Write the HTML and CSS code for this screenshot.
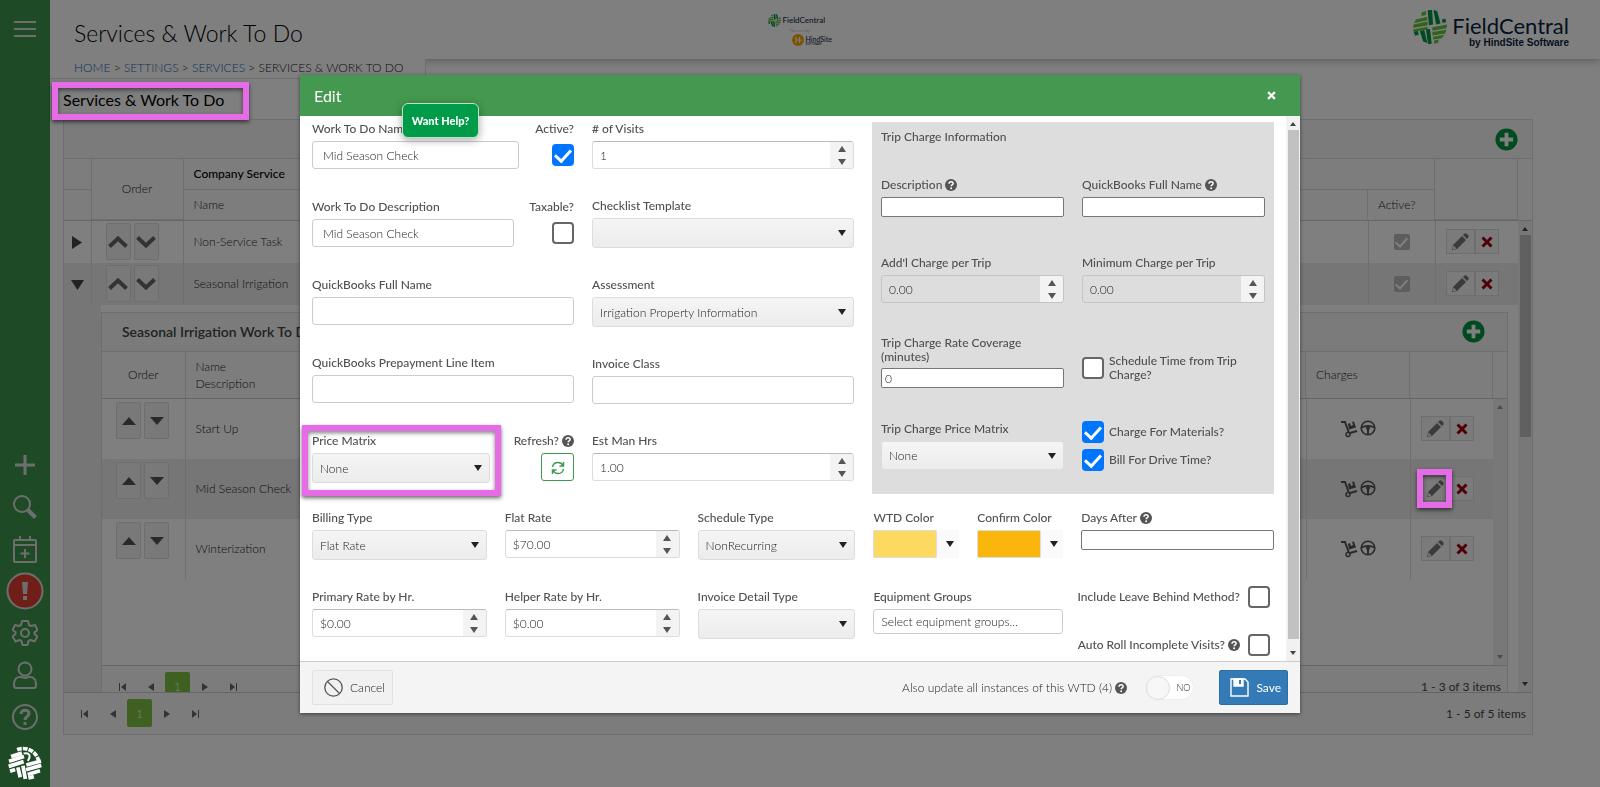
FILE: index.html
```html
<!DOCTYPE html>
<html lang="en">
<head>
  <meta charset="UTF-8">
  <title>Services &amp; Work To Do</title>
  <meta name="viewport" content="width=device-width, initial-scale=1.0">
  <link rel="stylesheet" href="styles.css">
</head>
<body>

<!-- shared icons -->
<svg class="sprite" aria-hidden="true">
  <symbol id="i-mark" viewBox="0 0 100 100">
    <g fill="#66c23c">
      <path d="M25 7l13-4v12l-13 3zM8 28l34-8v10L3 39zM2 43l41-9v11L0 53zM0 57l43-8v8l-40 7z"/>
      <path d="M57 51l43-8-1 11-42 7zM57 65l41-7-3 11-38 6zM59 79l33-6-7 10-26 4zM62 90l14-3-2 9-12 3z"/>
    </g>
    <g fill="#009444">
      <path d="M43 1l13-1 3 43-12 2zM60 0l11 3 10 37-13 3zM85 28l10-3 3 10-11 3zM2 64l12-2 3 11-11 3z"/>
      <path d="M20 62l13-3 9 38-12-4zM38 57l12-1 5 43-11 1z"/>
    </g>
  </symbol>
  <symbol id="i-help" viewBox="0 0 16 16">
    <circle cx="8" cy="8" r="8" fill="#555"/>
    <path d="M5.400 6.200c0-3.500 5.400-3.200 5.400-.3 0 2-2.600 1.900-2.600 3.900" fill="none" stroke="#fff" stroke-width="2"/>
    <circle cx="8.200" cy="12.300" r="1.300" fill="#fff"/>
  </symbol>
  <symbol id="i-pencil" viewBox="0 0 18 18">
    <path d="M1 17l1-5L11 3l4 4-9 9zM12 2l1-1c1-1 2-1 3 0l1 1c1 1 1 2 0 3l-1 1z" fill="#777"/>
    <path d="M2.500 12.500l3 3-3 1-1-1z" fill="#eee"/>
  </symbol>
  <symbol id="i-x" viewBox="0 0 12 12">
    <path d="M1.500 1.500l9 9M10.500 1.500l-9 9" stroke="currentColor" stroke-width="3"/>
  </symbol>
  <symbol id="i-add" viewBox="0 0 24 24">
    <circle cx="12" cy="12" r="11.500" fill="#009440"/>
    <path d="M12 5v14M5 12h14" stroke="#fff" stroke-width="4"/>
  </symbol>
  <symbol id="i-up" viewBox="0 0 20 12"><path d="M1.500 10.500L10 2.500l8.500 8" fill="none" stroke="#666" stroke-width="4"/></symbol>
  <symbol id="i-down" viewBox="0 0 20 12"><path d="M1.500 1.500L10 9.500l8.500-8" fill="none" stroke="#666" stroke-width="4"/></symbol>
  <symbol id="i-tri-up" viewBox="0 0 10 10" preserveAspectRatio="none"><path d="M0 10L5 0l5 10z" fill="currentColor"/></symbol>
  <symbol id="i-tri-down" viewBox="0 0 10 10" preserveAspectRatio="none"><path d="M0 0h10L5 10z" fill="currentColor"/></symbol>
  <symbol id="i-prev" viewBox="0 0 8 8"><path d="M7 0v8L1 4z" fill="#666"/></symbol>
  <symbol id="i-next" viewBox="0 0 8 8"><path d="M1 0v8l6-4z" fill="#666"/></symbol>
  <symbol id="i-first" viewBox="0 0 8 8"><path d="M1 0h1v8H1zM8 0v8L3 4z" fill="#666"/></symbol>
  <symbol id="i-last" viewBox="0 0 8 8"><path d="M6 0h1v8H6zM0 0v8l5-4z" fill="#666"/></symbol>
  <symbol id="i-cart" viewBox="0 0 18 18">
    <path d="M1 2h4l4 11" fill="none" stroke="#555" stroke-width="2"/>
    <circle cx="8" cy="14.500" r="2" fill="none" stroke="#555" stroke-width="1.500"/>
    <path d="M10 13l7-2" stroke="#555" stroke-width="2"/>
    <path d="M8 4l2-1 1 3 2-1-1-3 2-.5 2 6-7 2z" fill="#555"/>
  </symbol>
  <symbol id="i-wheel" viewBox="0 0 16 16">
    <circle cx="8" cy="8" r="6.800" fill="none" stroke="#555" stroke-width="1.600"/>
    <path d="M1.500 7.500C5 5.500 11 5.500 14.500 7.500M8 9v6" fill="none" stroke="#555" stroke-width="2"/>
    <circle cx="8" cy="8" r="2" fill="#555"/>
  </symbol>
</svg>

<nav class="sidebar">
  <button class="side-btn menu" aria-label="Menu">
    <svg width="22" height="18" viewBox="0 0 22 18"><path d="M0 2h22M0 9h22M0 16h22"/></svg>
  </button>
  <div class="side-bottom">
    <button class="side-btn" aria-label="Add"><svg width="20" height="20" viewBox="0 0 20 20"><path d="M10 0v20M0 10h20" stroke-width="3"/></svg></button>
    <button class="side-btn" aria-label="Search"><svg width="24" height="24" viewBox="0 0 24 24"><circle cx="9" cy="9" r="8"/><path d="M14.500 14.500l8 8" stroke-width="4"/></svg></button>
    <button class="side-btn" aria-label="Schedule"><svg width="24" height="27" viewBox="0 0 24 27"><rect x="1" y="4" width="22" height="22" rx="1"/><path d="M1 9h22M7 0v5M17 0v5M12 13v9M7.500 17.500h9"/></svg></button>
    <button class="side-btn" aria-label="Alerts"><svg width="38" height="38" viewBox="0 0 38 38"><circle cx="19" cy="19" r="17.500" fill="#e03c31"/><path d="M16 10h6l-1 12h-4zM17 24h4v4h-4z" fill="#ddd" stroke="none"/></svg></button>
    <button class="side-btn" aria-label="Settings"><svg width="26" height="26" viewBox="0 0 26 26"><path d="M10 1h6l1 4 2 1 4-1 2.500 5-3 2.500v1.500l3 2.500-3 5-4-1.500-2 1-1 4h-5l-1-4-2-1-4 1.500-3-5 3-2.500v-2L.5 10 3 5l4 1 2-1z" stroke-linejoin="round"/><circle cx="13" cy="13" r="4"/></svg></button>
    <button class="side-btn" aria-label="Account"><svg width="24" height="28" viewBox="0 0 24 28"><circle cx="12" cy="8" r="6.500"/><path d="M1 24c0-9 6-9 11-7 5-2 11-2 11 7 0 2-1 3-2 3H3c-1 0-2-1-2-3z"/></svg></button>
    <button class="side-btn" aria-label="Help"><svg width="26" height="26" viewBox="0 0 26 26"><circle cx="13" cy="13" r="12"/><path d="M9 10c0-5 8-5 8-.5 0 3-4 3-4 6.500M13 18v3" stroke-width="3"/></svg></button>
    <a class="side-logo" href="#" aria-label="FieldCentral">
      <svg width="34" height="34" viewBox="0 0 100 100" fill="none" stroke="#fff" stroke-width="11">
        <path d="M27 11A46 46 0 0 1 90 44" stroke-dasharray="14 3"/>
        <path d="M46 22c18-4 22 8 12 22" stroke-width="6"/>
        <path d="M9 31l32-10M3 45l44-14M2 60l44-14M6 74l15-5"/>
        <path d="M54 56l43-12M53 70l45-13M58 84l36-11" />
        <path d="M29 63l7 29M44 58l7 39M60 94l16-4"/>
      </svg>
    </a>
  </div>
</nav>

<div class="page">
  <header class="topbar">
    <h1>Services &amp; Work To Do</h1>
    <div class="center-logo">
      <div class="mini"><svg width="13" height="13"><use href="#i-mark"/></svg>FieldCentral</div>
      <div class="powered">Powered by</div>
      <div class="mini-hs">
        <svg width="12" height="12" viewBox="0 0 12 12"><circle cx="6" cy="6" r="6" fill="#f5a800"/><path d="M4 3v6M7.500 3v6M4 6h6" stroke="#fff"/></svg>
        <span>HindSite<small>SOFTWARE</small></span>
      </div>
    </div>
    <div class="brand">
      <svg width="34" height="34"><use href="#i-mark"/></svg>
      <div class="brand-text">FieldCentral<small>by HindSite Software</small></div>
    </div>
    <div class="breadcrumb">
      <a href="#">HOME</a> &gt; <a href="#">SETTINGS</a> &gt; <a href="#">SERVICES</a> &gt; SERVICES &amp; WORK TO DO
    </div>
  </header>

  <main>
    <h2><span class="callout callout-title"></span>Services &amp; Work To Do</h2>

    <div class="grid">
      <div class="grid-toolbar"><button class="add-btn" aria-label="Add service"><svg width="23" height="23"><use href="#i-add"/></svg></button></div>
      <div class="grid-head">
        <table>
          <colgroup><col class="w-expand"><col class="w-order"><col><col class="w-active"><col class="w-actions"></colgroup>
          <tr><th></th><th rowspan="2" class="center">Order</th><th colspan="2" class="strong">Company Service</th><th rowspan="2"></th></tr>
          <tr><th></th><th>Name</th><th>Active?</th></tr>
        </table>
      </div>
      <div class="grid-content">
        <div class="grid-scroll">
          <table class="rows">
            <colgroup><col class="w-expand"><col class="w-order"><col><col class="w-active"><col class="w-actions"></colgroup>
            <tr>
              <td class="center"><svg width="10" height="13" viewBox="0 0 10 13"><path d="M0 0l10 6.500L0 13z" fill="#444"/></svg></td>
              <td><div class="pair"><button class="move" aria-label="Move up"><svg width="20" height="12"><use href="#i-up"/></svg></button><button class="move" aria-label="Move down"><svg width="20" height="12"><use href="#i-down"/></svg></button></div></td>
              <td>Non-Service Task</td>
              <td class="center"><input type="checkbox" class="check off" checked disabled aria-label="Active"></td>
              <td><div class="actions"><button aria-label="Edit"><svg width="18" height="18"><use href="#i-pencil"/></svg></button><button class="del" aria-label="Delete"><svg width="12" height="12"><use href="#i-x"/></svg></button></div></td>
            </tr>
            <tr class="alt">
              <td class="center"><svg width="13" height="10" viewBox="0 0 13 10"><path d="M0 0h13L6.500 10z" fill="#444"/></svg></td>
              <td><div class="pair"><button class="move" aria-label="Move up"><svg width="20" height="12"><use href="#i-up"/></svg></button><button class="move" aria-label="Move down"><svg width="20" height="12"><use href="#i-down"/></svg></button></div></td>
              <td>Seasonal Irrigation</td>
              <td class="center"><input type="checkbox" class="check off" checked disabled aria-label="Active"></td>
              <td><div class="actions"><button aria-label="Edit"><svg width="18" height="18"><use href="#i-pencil"/></svg></button><button class="del" aria-label="Delete"><svg width="12" height="12"><use href="#i-x"/></svg></button></div></td>
            </tr>
          </table>

          <div class="detail">
            <div class="detail-grid">
              <div class="grid-toolbar"><h3>Seasonal Irrigation Work To Do</h3><button class="add-btn" aria-label="Add work to do"><svg width="23" height="23"><use href="#i-add"/></svg></button></div>
              <div class="grid-head">
                <table>
                  <colgroup><col class="w-suborder"><col><col class="w-charges"><col class="w-actions"></colgroup>
                  <tr><th class="center">Order</th><th>Name<br>Description</th><th>Charges</th><th></th></tr>
                </table>
              </div>
              <div class="detail-content">
                <table class="rows subrows">
                  <colgroup><col class="w-suborder"><col><col class="w-charges"><col class="w-actions"></colgroup>
                  <tr>
                    <td><div class="pair"><button class="move" aria-label="Move up"><svg width="14" height="8"><use href="#i-tri-up"/></svg></button><button class="move" aria-label="Move down"><svg width="14" height="8"><use href="#i-tri-down"/></svg></button></div></td>
                    <td>Start Up</td>
                    <td class="center"><div class="charges"><svg width="18" height="18"><use href="#i-cart"/></svg><svg width="16" height="16"><use href="#i-wheel"/></svg></div></td>
                    <td><div class="actions"><button aria-label="Edit"><svg width="18" height="18"><use href="#i-pencil"/></svg></button><button class="del" aria-label="Delete"><svg width="12" height="12"><use href="#i-x"/></svg></button></div></td>
                  </tr>
                  <tr class="alt">
                    <td><div class="pair"><button class="move" aria-label="Move up"><svg width="14" height="8"><use href="#i-tri-up"/></svg></button><button class="move" aria-label="Move down"><svg width="14" height="8"><use href="#i-tri-down"/></svg></button></div></td>
                    <td>Mid Season Check</td>
                    <td class="center"><div class="charges"><svg width="18" height="18"><use href="#i-cart"/></svg><svg width="16" height="16"><use href="#i-wheel"/></svg></div></td>
                    <td><div class="actions"><span class="callout callout-edit"></span><button aria-label="Edit"><svg width="18" height="18"><use href="#i-pencil"/></svg></button><button class="del" aria-label="Delete"><svg width="12" height="12"><use href="#i-x"/></svg></button></div></td>
                  </tr>
                  <tr>
                    <td><div class="pair"><button class="move" aria-label="Move up"><svg width="14" height="8"><use href="#i-tri-up"/></svg></button><button class="move" aria-label="Move down"><svg width="14" height="8"><use href="#i-tri-down"/></svg></button></div></td>
                    <td>Winterization</td>
                    <td class="center"><div class="charges"><svg width="18" height="18"><use href="#i-cart"/></svg><svg width="16" height="16"><use href="#i-wheel"/></svg></div></td>
                    <td><div class="actions"><button aria-label="Edit"><svg width="18" height="18"><use href="#i-pencil"/></svg></button><button class="del" aria-label="Delete"><svg width="12" height="12"><use href="#i-x"/></svg></button></div></td>
                  </tr>
                </table>
                <div class="scrollbar muted"><svg width="6" height="4"><use href="#i-tri-up"/></svg><svg width="6" height="4"><use href="#i-tri-down"/></svg></div>
              </div>
              <div class="pager">
                <button aria-label="First"><svg width="8" height="8"><use href="#i-first"/></svg></button>
                <button aria-label="Previous"><svg width="8" height="8"><use href="#i-prev"/></svg></button>
                <button class="current">1</button>
                <button aria-label="Next"><svg width="8" height="8"><use href="#i-next"/></svg></button>
                <button aria-label="Last"><svg width="8" height="8"><use href="#i-last"/></svg></button>
                <span>1 - 3 of 3 items</span>
              </div>
            </div>
          </div>
        </div>
        <div class="scrollbar outer"><svg width="6" height="4"><use href="#i-tri-up"/></svg><div class="thumb"></div><svg width="6" height="4"><use href="#i-tri-down"/></svg></div>
      </div>
      <div class="pager">
        <button aria-label="First"><svg width="8" height="8"><use href="#i-first"/></svg></button>
        <button aria-label="Previous"><svg width="8" height="8"><use href="#i-prev"/></svg></button>
        <button class="current">1</button>
        <button aria-label="Next"><svg width="8" height="8"><use href="#i-next"/></svg></button>
        <button aria-label="Last"><svg width="8" height="8"><use href="#i-last"/></svg></button>
        <span>1 - 5 of 5 items</span>
      </div>
    </div>
  </main>
</div>

<div class="overlay">
  <form class="modal" role="dialog" aria-labelledby="modalTitle">
    <div class="modal-head">
      <h2 id="modalTitle">Edit</h2>
      <button type="button" aria-label="Close"><svg width="9" height="9"><use href="#i-x"/></svg></button>
    </div>
    <button type="button" class="want-help">Want Help?</button>

    <div class="modal-body">
      <div class="form">
        <div class="form-top">
          <div class="col col-wide">
            <div class="split">
              <div class="field"><label for="name">Work To Do Name</label><input type="text" class="text" id="name" value="Mid Season Check"></div>
              <div class="field side"><label for="active">Active?</label><input type="checkbox" class="check" id="active" checked></div>
            </div>
            <div class="split">
              <div class="field"><label for="desc">Work To Do Description</label><input type="text" class="text" id="desc" value="Mid Season Check"></div>
              <div class="field side tax"><label for="taxable">Taxable?</label><input type="checkbox" class="check" id="taxable"></div>
            </div>
            <div class="field"><label for="qbName">QuickBooks Full Name</label><input type="text" class="text" id="qbName"></div>
            <div class="field"><label for="qbPre">QuickBooks Prepayment Line Item</label><input type="text" class="text" id="qbPre"></div>
            <div class="split">
              <div class="field"><span class="callout callout-matrix"></span><label for="matrix">Price Matrix</label><div class="select"><select id="matrix"><option>None</option></select></div></div>
              <div class="field side wide"><label for="refresh">Refresh? <svg width="12" height="12"><use href="#i-help"/></svg></label>
                <button type="button" class="refresh" id="refresh" aria-label="Refresh"><svg width="14" height="14" viewBox="0 0 14 14" fill="none" stroke="#3d9a4c" stroke-width="1.500"><path d="M1.500 6C2 3 4 1.500 7 1.500c2 0 4 1 5 3M12.500 8c-.5 3-2.500 4.500-5.500 4.500-2 0-4-1-5-3M12.500 1v4h-4M1.500 13V9h4"/></svg></button></div>
            </div>
          </div>

          <div class="col">
            <div class="field"><label for="visits"># of Visits</label><div class="numeric"><input id="visits" value="1"><div class="spin"><button type="button" aria-label="Increase"><svg width="8" height="6"><use href="#i-tri-up"/></svg></button><button type="button" aria-label="Decrease"><svg width="8" height="6"><use href="#i-tri-down"/></svg></button></div></div></div>
            <div class="field"><label for="checklist">Checklist Template</label><div class="select"><select id="checklist"><option></option></select></div></div>
            <div class="field"><label for="assess">Assessment</label><div class="select"><select id="assess"><option>Irrigation Property Information</option></select></div></div>
            <div class="field"><label for="invClass">Invoice Class</label><input type="text" class="text" id="invClass"></div>
            <div class="field"><label for="hrs">Est Man Hrs</label><div class="numeric"><input id="hrs" value="1.00"><div class="spin"><button type="button" aria-label="Increase"><svg width="8" height="6"><use href="#i-tri-up"/></svg></button><button type="button" aria-label="Decrease"><svg width="8" height="6"><use href="#i-tri-down"/></svg></button></div></div></div>
          </div>

          <fieldset class="trip">
            <h3>Trip Charge Information</h3>
            <div class="trip-grid">
              <div class="field"><label for="tDesc">Description <svg width="12" height="12"><use href="#i-help"/></svg></label><input type="text" class="plain" id="tDesc"></div>
              <div class="field"><label for="tQb">QuickBooks Full Name <svg width="12" height="12"><use href="#i-help"/></svg></label><input type="text" class="plain" id="tQb"></div>
              <div class="field"><label for="tAdd">Add'l Charge per Trip</label><div class="numeric gray"><input id="tAdd" value="0.00"><div class="spin"><button type="button" aria-label="Increase"><svg width="8" height="6"><use href="#i-tri-up"/></svg></button><button type="button" aria-label="Decrease"><svg width="8" height="6"><use href="#i-tri-down"/></svg></button></div></div></div>
              <div class="field"><label for="tMin">Minimum Charge per Trip</label><div class="numeric gray"><input id="tMin" value="0.00"><div class="spin"><button type="button" aria-label="Increase"><svg width="8" height="6"><use href="#i-tri-up"/></svg></button><button type="button" aria-label="Decrease"><svg width="8" height="6"><use href="#i-tri-down"/></svg></button></div></div></div>
              <div class="field"><label for="tCov" class="two-line">Trip Charge Rate Coverage<br>(minutes)</label><input type="text" class="plain" id="tCov" value="0"></div>
              <div class="tick middle"><input type="checkbox" class="check" id="tSched"><label for="tSched" class="two-line">Schedule Time from Trip Charge?</label></div>
              <div class="field"><label for="tMatrix">Trip Charge Price Matrix</label><div class="select short"><select id="tMatrix"><option>None</option></select></div></div>
              <div class="ticks">
                <div class="tick"><input type="checkbox" class="check" id="tMat" checked><label for="tMat">Charge For Materials?</label></div>
                <div class="tick"><input type="checkbox" class="check" id="tDrive" checked><label for="tDrive">Bill For Drive Time?</label></div>
              </div>
            </div>
          </fieldset>
        </div>

        <div class="form-bottom">
          <div class="field"><label for="billing">Billing Type</label><div class="select"><select id="billing"><option>Flat Rate</option></select></div></div>
          <div class="field"><label for="flat">Flat Rate</label><div class="numeric"><input id="flat" value="$70.00"><div class="spin"><button type="button" aria-label="Increase"><svg width="8" height="6"><use href="#i-tri-up"/></svg></button><button type="button" aria-label="Decrease"><svg width="8" height="6"><use href="#i-tri-down"/></svg></button></div></div></div>
          <div class="field"><label for="sched">Schedule Type</label><div class="select"><select id="sched"><option>NonRecurring</option></select></div></div>
          <div class="field"><label for="wtdColor">WTD Color</label><button type="button" class="color" id="wtdColor"><span class="swatch yellow"></span><svg width="8" height="6"><use href="#i-tri-down"/></svg></button></div>
          <div class="field"><label for="confColor">Confirm Color</label><button type="button" class="color" id="confColor"><span class="swatch orange"></span><svg width="8" height="6"><use href="#i-tri-down"/></svg></button></div>
          <div class="last-col">
            <div class="field"><label for="days">Days After <svg width="12" height="12"><use href="#i-help"/></svg></label><input type="text" class="plain" id="days"></div>
            <div class="options">
              <div class="option"><label for="leave">Include Leave Behind Method?</label><input type="checkbox" class="check" id="leave"></div>
              <div class="option"><label for="roll">Auto Roll Incomplete Visits? <svg width="12" height="12"><use href="#i-help"/></svg></label><input type="checkbox" class="check" id="roll"></div>
            </div>
          </div>

          <div class="field"><label for="primary">Primary Rate by Hr.</label><div class="numeric"><input id="primary" value="$0.00"><div class="spin"><button type="button" aria-label="Increase"><svg width="8" height="6"><use href="#i-tri-up"/></svg></button><button type="button" aria-label="Decrease"><svg width="8" height="6"><use href="#i-tri-down"/></svg></button></div></div></div>
          <div class="field"><label for="helper">Helper Rate by Hr.</label><div class="numeric"><input id="helper" value="$0.00"><div class="spin"><button type="button" aria-label="Increase"><svg width="8" height="6"><use href="#i-tri-up"/></svg></button><button type="button" aria-label="Decrease"><svg width="8" height="6"><use href="#i-tri-down"/></svg></button></div></div></div>
          <div class="field"><label for="invDetail">Invoice Detail Type</label><div class="select"><select id="invDetail"><option></option></select></div></div>
          <div class="field equip"><label for="equip">Equipment Groups</label><input type="text" class="text slim" id="equip" placeholder="Select equipment groups..."></div>
        </div>
      </div>
      <div class="scrollbar"><svg width="6" height="4"><use href="#i-tri-up"/></svg><div class="thumb"></div><svg width="6" height="4"><use href="#i-tri-down"/></svg></div>
    </div>

    <div class="modal-foot">
      <button type="button" class="cancel"><svg width="19" height="19" viewBox="0 0 19 19" fill="none" stroke="#555" stroke-width="1.300"><circle cx="9.500" cy="9.500" r="8.700"/><path d="M3.500 3.500l12 12"/></svg>Cancel</button>
      <label class="also" for="updateAll">Also update all instances of this WTD (4) <svg width="12" height="12"><use href="#i-help"/></svg></label>
      <span class="switch"><input type="checkbox" id="updateAll"><span>NO</span></span>
      <button type="submit" class="save"><svg width="19" height="19" viewBox="0 0 19 19" fill="none" stroke="#fff" stroke-width="1.400"><path d="M1 1h14l3 3v14H1z"/><path d="M4 1h9v7H4z" fill="#fff"/><path d="M10 2v4" stroke="#337ab7" stroke-width="2"/></svg>Save</button>
    </div>
  </form>
</div>

</body>
</html>
```
FILE: styles.css
```css
* {
  box-sizing: border-box;
}
body {
  margin: 0;
  display: flex;
  min-height: 100vh;
  background: #fff;
  color: #222;
  font-family: Lato, "Open Sans", sans-serif;
  font-size: 12px;
  font-weight: 300;
}
button, input, select {
  font: inherit;
  color: inherit;
  margin: 0;
}
button {
  padding: 0;
  cursor: pointer;
}
h1, h2, h3 {
  margin: 0;
  font-weight: 400;
}
a {
  color: #1a66ad;
  text-decoration: none;
}
.sprite {
  position: absolute;
  width: 0;
  height: 0;
}

/* sidebar */
.sidebar {
  flex: 0 0 50px;
  display: flex;
  flex-direction: column;
  justify-content: space-between;
  background: #3e944c;
}
.side-btn {
  display: flex;
  align-items: center;
  justify-content: center;
  width: 50px;
  height: 42px;
  border: 0;
  background: none;
}
.side-btn svg {
  fill: none;
  stroke: #ddd;
  stroke-width: 2;
}
.side-btn.menu {
  height: 57px;
}
.side-logo {
  position: relative;
  z-index: 20;
  display: flex;
  align-items: center;
  justify-content: center;
  height: 49px;
}

/* page header */
.page {
  flex: 1;
  min-width: 0;
}
.topbar {
  position: relative;
  display: flex;
  height: 59px;
  padding: 0 31px 0 24px;
  box-shadow: 0 2px 8px #bbb;
  clip-path: inset(0 0 -30px 0);
}
.topbar h1 {
  flex: 0 0 calc(50% - 54px);
  padding-top: 18px;
  color: #000;
  font-size: 23px;
  font-weight: 300;
  line-height: 30px;
}
.breadcrumb {
  position: absolute;
  left: 0;
  top: 59px;
  height: 20px;
  padding: 0 22px 0 24px;
  background: #fff;
  border-bottom: 1px solid #ddd;
  border-right: 1px solid #ddd;
  line-height: 17px;
}
.center-logo {
  padding-top: 13px;
  color: #1b2a44;
}
.mini, .mini-hs {
  display: flex;
  align-items: center;
  gap: 2px;
  font-size: 8px;
  font-weight: 500;
  line-height: 14px;
}
.powered {
  padding-left: 22px;
  color: #999;
  font-size: 4px;
  line-height: 7px;
}
.mini-hs {
  padding-left: 24px;
  font-size: 7px;
  line-height: 8px;
}
.mini-hs small {
  display: block;
  font-size: 3px;
  line-height: 3px;
}
.brand {
  flex: 1;
  display: flex;
  justify-content: flex-end;
  gap: 5px;
  padding-top: 10px;
}
.brand-text {
  padding-top: 4px;
  color: #0b1f3f;
  font-size: 22px;
  font-weight: 400;
  line-height: 24px;
  text-align: right;
}
.brand-text small {
  display: block;
  font: bold 10px/10px "Liberation Sans", sans-serif;
}

/* services grid */
main {
  padding: 30px 67px 0 13px;
}
main h2 {
  position: relative;
  height: 30px;
  color: #000;
  font-size: 16px;
  line-height: 22px;
}
.grid {
  border: 1px solid #ddd;
}
.grid-toolbar {
  display: flex;
  align-items: center;
  justify-content: flex-end;
  height: 39px;
  padding-right: 14px;
  background: #f6f6f6;
  border-bottom: 1px solid #ddd;
}
.grid-toolbar h3 {
  flex: 1;
  padding-left: 20px;
  font-size: 14px;
  font-weight: 600;
  color: #444;
}
.add-btn {
  display: flex;
  border: 0;
  background: none;
}
.grid-head {
  padding-right: 14px;
  background: #fafafa;
  border-bottom: 1px solid #ccc;
}
table {
  width: 100%;
  border-collapse: collapse;
  table-layout: fixed;
}
th {
  height: 30px;
  padding: 0 10px;
  border-right: 1px solid #ddd;
  border-bottom: 1px solid #ddd;
  font-weight: 300;
  line-height: 17px;
  text-align: left;
}
tr:last-child th {
  border-bottom: 0;
}
.strong {
  color: #000;
  font-weight: 500;
}
td {
  height: 42px;
  padding: 0 10px;
  border-right: 1px solid #ddd;
}
.rows td:last-child {
  border-right: 0;
}
th.center, td.center {
  padding: 0;
  text-align: center;
}
td.center svg, td.center input {
  vertical-align: middle;
}
.w-expand {
  width: 27px;
}
.w-order {
  width: 92px;
}
.w-active {
  width: 67px;
}
.w-actions {
  width: 83px;
}
.w-suborder {
  width: 83px;
}
.w-charges {
  width: 104px;
}
.alt {
  background: #ececec;
}
.grid-content {
  display: flex;
  height: calc(100vh - 316px);
  min-height: 200px;
  overflow: hidden;
}
.grid-scroll {
  flex: 1;
  min-width: 0;
}
.pair {
  display: flex;
  gap: 3px;
  padding-left: 4px;
}
.move {
  display: flex;
  align-items: center;
  justify-content: center;
  width: 25px;
  height: 37px;
  background: #f3f3f3;
  border: 1px solid #ddd;
  border-radius: 2px;
  color: #555;
}
.actions {
  position: relative;
  display: flex;
}
.actions button {
  display: flex;
  align-items: center;
  justify-content: center;
  width: 29px;
  height: 25px;
  background: #f6f6f6;
  border: 1px solid #ddd;
}
.actions .del {
  width: 24px;
  color: #a00010;
}
.detail {
  padding: 7px 10px 0 37px;
  background: linear-gradient(to right, #ececec 37px, #fff 37px);
}
.detail-grid {
  border: 1px solid #ddd;
}
.detail-grid th {
  height: 46px;
}
.detail-grid .grid-toolbar {
  padding-right: 22px;
}
.detail-content {
  display: flex;
  height: 266px;
}
.subrows {
  height: 180px;
}
.subrows td {
  height: 60px;
}
.subrows .pair {
  height: 53px;
}
.charges {
  display: flex;
  justify-content: center;
  gap: 2px;
}
.pager {
  display: flex;
  align-items: center;
  height: 42px;
  padding: 0 6px 0 5px;
  background: #f9f9f9;
  border-top: 1px solid #ccc;
}
.pager button {
  width: 29px;
  height: 28px;
  border: 0;
  background: none;
}
.pager .current {
  width: 25px;
  background: #7cc242;
  border-radius: 2px;
  color: #fff;
}
.pager span {
  margin-left: auto;
  color: #444;
  font-weight: 400;
}
.scrollbar {
  flex: 0 0 14px;
  display: flex;
  flex-direction: column;
  align-items: center;
  justify-content: space-between;
  padding: 6px 0;
  background: #f1f1f1;
  color: #444;
}
.scrollbar.muted {
  color: #999;
}
.scrollbar .thumb {
  flex: 1;
  width: 11px;
  margin: 4px 0 12px;
  background: #c1c1c1;
}
.scrollbar.outer .thumb {
  flex: 0 0 202px;
  margin-bottom: auto;
}

/* magenta highlight frames */
.callout {
  position: absolute;
  z-index: 20;
  border: 6px solid #e66be6;
  box-shadow: 0 2px 4px rgba(0,0,0,0.6), inset 0 2px 4px rgba(0,0,0,0.5);
  pointer-events: none;
}
.callout-title {
  left: -11px;
  top: -7px;
  width: 197px;
  height: 38px;
}
.callout-edit {
  left: -4px;
  top: -7px;
  width: 35px;
  height: 39px;
}
.callout-matrix {
  inset: -8px -11px -13px -10px;
}

/* modal */
.overlay {
  position: fixed;
  inset: 0;
  z-index: 10;
  display: flex;
  align-items: flex-start;
  justify-content: center;
  padding-top: 75px;
  background: rgba(0,0,0,0.5);
}
.modal {
  position: relative;
  width: 62.5%;
  min-width: 900px;
  background: #fff;
  box-shadow: 0 1px 4px rgba(0,0,0,0.5);
}
.modal-head {
  display: flex;
  align-items: center;
  justify-content: space-between;
  height: 41px;
  padding: 0 24px 0 14px;
  background: #45984f;
  color: #fff;
}
.modal-head h2 {
  font-size: 16px;
}
.modal-head button {
  display: flex;
  border: 0;
  background: none;
}
.want-help {
  position: absolute;
  left: 102px;
  top: 28px;
  z-index: 1;
  width: 77px;
  height: 35px;
  background: #009b48;
  border: 1px solid #bfe3c8;
  border-radius: 6px;
  box-shadow: 0 2px 8px rgba(0,0,0,0.35);
  color: #fff;
  font-size: 11px;
  font-weight: 900;
}
.modal-body {
  display: flex;
}
.form {
  flex: 1;
  min-width: 0;
  padding: 5px 12px;
}
.form-top {
  display: grid;
  grid-template-columns: 262fr 262fr 402fr;
  gap: 18px;
}
.col {
  display: flex;
  flex-direction: column;
  gap: 29px;
}
.col-wide {
  gap: 30px;
}
.split {
  display: flex;
}
.split .field {
  flex: 1;
}
.split .side {
  display: flex;
  flex-direction: column;
  align-items: flex-end;
  flex: 0 0 55px;
}
.split .tax {
  flex-basis: 60px;
}
.split .wide {
  flex-basis: 84px;
}
.side .check {
  margin-top: 3px;
}
.field {
  position: relative;
  min-width: 0;
}
label {
  color: #505050;
  font-weight: 500;
  line-height: 16px;
}
.field label {
  display: block;
  margin-bottom: 4px;
  white-space: nowrap;
}
label svg {
  vertical-align: -2px;
}
.field .two-line, .two-line {
  line-height: 14px;
  white-space: normal;
}
.text {
  display: block;
  width: 100%;
  height: 28px;
  padding: 0 10px;
  background: #fff;
  border: 1px solid #ccc;
  border-radius: 3px;
}
.text.slim {
  height: 25px;
  padding: 0 7px;
}
.text::placeholder {
  color: #222;
}
.plain {
  display: block;
  width: 100%;
  height: 20px;
  padding: 0 3px;
  background: #fff;
  border: 1px solid #777;
  border-radius: 2px;
}
.select {
  position: relative;
}
.select select {
  display: block;
  width: 100%;
  height: 30px;
  padding: 0 7px;
  appearance: none;
  background: linear-gradient(#f5f5f5, #ececec);
  border: 1px solid #ddd;
  border-radius: 3px;
}
.select.short select {
  height: 29px;
}
.select::after {
  content: "";
  position: absolute;
  right: 8px;
  top: 12px;
  border: 4px solid transparent;
  border-top: 6px solid #222;
  border-bottom: 0;
}
.numeric {
  display: flex;
  height: 28px;
  border: 1px solid #ddd;
  border-top-color: #bbb;
  border-radius: 3px;
  overflow: hidden;
}
.numeric input {
  flex: 1;
  min-width: 0;
  padding: 0 7px;
  border: 0;
  background: none;
}
.spin {
  display: flex;
  flex-direction: column;
  width: 23px;
  background: #f3f3f3;
  color: #555;
}
.spin button {
  flex: 1;
  display: flex;
  align-items: center;
  justify-content: center;
  border: 0;
  background: none;
}
.gray {
  border-color: #c4c4c4;
}
.check {
  flex: none;
  display: grid;
  place-items: center;
  width: 22px;
  height: 22px;
  appearance: none;
  background: #fff;
  border: 2px solid #666;
  border-radius: 4px;
}
.check:checked {
  background: #0075ff;
  border-color: #0075ff;
}
.check:checked::after {
  content: "";
  width: 7px;
  height: 13px;
  margin-bottom: 3px;
  border: solid #fff;
  border-width: 0 3px 3px 0;
  transform: rotate(42deg);
}
.check.off {
  display: inline-grid;
  width: 16px;
  height: 16px;
  background: #bbb;
  border: 0;
  border-radius: 2px;
}
.check.off::after {
  width: 5px;
  height: 10px;
  border-width: 0 2px 2px 0;
}
.refresh {
  width: 33px;
  height: 28px;
  background: #fff;
  border: 1px solid #3d9a4c;
  border-radius: 3px;
}
.refresh svg {
  vertical-align: middle;
}
.trip {
  min-width: 0;
  margin: 1px 0 0;
  padding: 7px 9px 0;
  border: 0;
  background: #ddd;
}
.trip h3 {
  height: 48px;
  color: #505050;
  font-size: 12px;
  font-weight: 500;
  line-height: 16px;
}
.trip-grid {
  display: grid;
  grid-template-columns: 1fr 1fr;
  grid-template-rows: 78px 81px 85px 73px;
  column-gap: 18px;
}
.tick {
  display: flex;
  align-items: center;
  gap: 5px;
}
.middle {
  align-self: start;
  padding-top: 18px;
}
.ticks {
  display: flex;
  flex-direction: column;
  gap: 6px;
}
.form-bottom {
  display: grid;
  grid-template-columns: 175fr 175fr 158fr 86fr 86fr 193fr;
  grid-template-rows: 50px auto;
  gap: 29px 18px;
  padding-top: 16px;
}
.color {
  display: flex;
  align-items: center;
  width: 100%;
  height: 28px;
  background: #fafafa;
  border: 0;
}
.swatch {
  width: 64px;
  height: 28px;
  margin-right: 9px;
  border: 1px solid #ddd;
  border-radius: 2px;
}
.yellow {
  background: #fdd95f;
}
.orange {
  background: #fbb60d;
}
.equip {
  grid-column: span 2;
}
.last-col {
  display: flex;
  flex-direction: column;
  gap: 36px;
  grid-row: span 2;
  min-width: 0;
}
.options {
  display: flex;
  flex-direction: column;
  gap: 26px;
  padding-right: 4px;
}
.option {
  display: flex;
  align-items: center;
  justify-content: flex-end;
  gap: 8px;
  white-space: nowrap;
}
.modal-foot {
  display: flex;
  align-items: center;
  height: 52px;
  padding: 0 12px;
  background: #f4f4f4;
  border-top: 1px solid #ccc;
}
.cancel, .save {
  display: flex;
  align-items: center;
  gap: 7px;
  height: 35px;
  padding: 0 7px 0 11px;
  border-radius: 2px;
}
.cancel {
  background: #f1f1f1;
  border: 1px solid #e2e2e2;
}
.save {
  padding: 0 6px 0 10px;
  background: #337ab7;
  border: 1px solid #2e6da4;
  color: #fff;
  font-weight: 400;
}
.also {
  margin-left: auto;
  color: #222;
  font-weight: 300;
}
.switch {
  display: flex;
  align-items: center;
  width: 49px;
  height: 25px;
  margin: 0 25px 0 18px;
  background: #fff;
  border: 1px solid #eee;
  border-radius: 13px;
}
.switch input {
  width: 24px;
  height: 24px;
  appearance: none;
  background: #f7f7f7;
  border: 1px solid #ddd;
  border-radius: 50%;
}
.switch span {
  padding-left: 6px;
  font-size: 9px;
}
```
